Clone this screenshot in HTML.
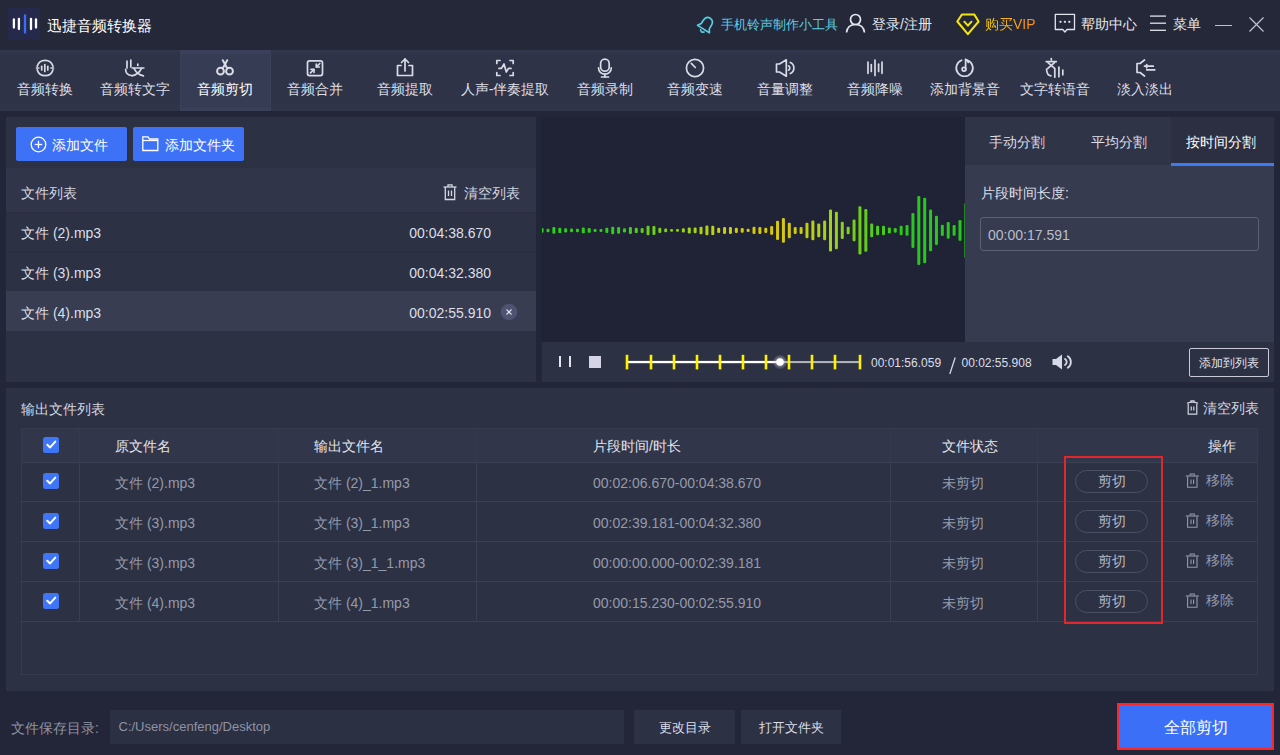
<!DOCTYPE html><html><head><meta charset="utf-8"><style>
html,body{margin:0;padding:0;}
body{width:1280px;height:755px;overflow:hidden;position:relative;background:#222638;font-family:"Liberation Sans",sans-serif;}
.t{position:absolute;white-space:nowrap;}
.b{position:absolute;box-sizing:border-box;}
svg{position:absolute;overflow:visible;}
</style></head><body>
<div class="b" style="left:0px;top:0px;width:1280px;height:50px;background:#242839;"></div>
<div class="b" style="left:8px;top:8px;width:32px;height:32px;background:#252a4d;"></div>
<svg style="left:0px;top:0px" width="48" height="48"><g stroke-linecap="round"><line x1="13.9" y1="19.5" x2="13.9" y2="27.5" stroke="#fff" stroke-width="2.3"/><line x1="18.9" y1="18.8" x2="18.9" y2="29" stroke="#fff" stroke-width="2.3"/><line x1="25" y1="15.5" x2="25" y2="32.5" stroke="#3a6ef6" stroke-width="2.3"/><line x1="31" y1="18.8" x2="31" y2="29" stroke="#fff" stroke-width="2.3"/><line x1="36" y1="19.5" x2="36" y2="27.5" stroke="#fff" stroke-width="2.3"/></g></svg>
<div class="t" style="top:15.7px;left:47.0px;font-size:15px;line-height:20px;color:#ffffff;">迅捷音频转换器</div>
<svg style="left:695px;top:14px" width="22" height="22" viewBox="0 0 22 22"><g transform="rotate(32 11 11)" fill="none" stroke="#56cfe1" stroke-width="1.7" stroke-linejoin="round" stroke-linecap="round"><path d="M11 3 C7.3 3 6.2 6 6.2 9 L6.2 12.3 L4 15.8 H18 L15.8 12.3 L15.8 9 C15.8 6 14.7 3 11 3 Z"/><path d="M9 18 Q11 20.3 13 18"/></g></svg>
<div class="t" style="top:14.7px;left:721.0px;font-size:12.5px;line-height:20px;color:#5fcde3;">手机铃声制作小工具</div>
<svg style="left:845px;top:13px" width="21" height="20" viewBox="0 0 21 20"><g fill="none" stroke="#e6e8ef" stroke-width="1.7"><circle cx="10.5" cy="6.5" r="5"/><path d="M1.5 19.5 Q2.5 11.5 10.5 11.5 Q18.5 11.5 19.5 19.5"/></g></svg>
<div class="t" style="top:13.9px;left:872.0px;font-size:14px;line-height:20px;color:#e6e8ef;">登录/注册</div>
<svg style="left:955px;top:13px" width="26" height="24" viewBox="0 0 26 24"><defs><radialGradient id="vg" cx="0.2" cy="0.8" r="0.5"><stop offset="0" stop-color="#c8c8c8" stop-opacity="0.6"/><stop offset="1" stop-color="#c8c8c8" stop-opacity="0"/></radialGradient></defs><path d="M7 1.4 L19.2 1.4 L23.6 8.5 L12.9 21.2 L2.3 8.5 Z" fill="none" stroke="#f3e60c" stroke-width="2" stroke-linejoin="round"/><path d="M9.3 8.7 L12.9 12.7 L16.5 8.7" fill="none" stroke="#f3e60c" stroke-width="2" stroke-linecap="round" stroke-linejoin="round"/></svg>
<div class="t" style="top:14.1px;left:985.0px;font-size:14px;line-height:20px;color:#f5b00c;"><span style="background:linear-gradient(90deg,#f6cf0a,#ff8a1c);-webkit-background-clip:text;color:transparent">购买VIP</span></div>
<svg style="left:1054px;top:13px" width="23" height="21" viewBox="0 0 23 21"><g fill="none" stroke="#e2e4ec" stroke-width="1.3" stroke-linejoin="round"><path d="M1.3 1.3 H20.5 V16.5 H13 L10.9 19 L8.8 16.5 H1.3 Z"/></g><circle cx="6.5" cy="8.8" r="1.15" fill="#e2e4ec"/><circle cx="10.9" cy="8.8" r="1.15" fill="#e2e4ec"/><circle cx="15.3" cy="8.8" r="1.15" fill="#e2e4ec"/></svg>
<div class="t" style="top:13.7px;left:1080.5px;font-size:14px;line-height:20px;color:#e6e8ef;">帮助中心</div>
<svg style="left:1149px;top:14px" width="18" height="18"><g stroke="#e2e4ec" stroke-width="1.3"><line x1="1" y1="2.1" x2="17" y2="2.1"/><line x1="1" y1="9.2" x2="17" y2="9.2"/><line x1="1" y1="16.3" x2="17" y2="16.3"/></g></svg>
<div class="t" style="top:13.9px;left:1173.0px;font-size:14px;line-height:20px;color:#e6e8ef;">菜单</div>
<div class="b" style="left:1215px;top:24.5px;width:17px;height:1.2px;background:#bfc1cc;"></div>
<svg style="left:1249px;top:17px" width="15" height="15"><g stroke="#bfc1cc" stroke-width="1.2"><line x1="0.5" y1="0.5" x2="14.5" y2="14.5"/><line x1="14.5" y1="0.5" x2="0.5" y2="14.5"/></g></svg>
<div class="b" style="left:0px;top:50px;width:1280px;height:61px;background:linear-gradient(#32374c,#2e3347 5px,#2e3347 54px,#30354a 55px,#30354a);"></div>
<div class="b" style="left:180px;top:50px;width:91px;height:61px;background:#363c53;box-shadow:inset 0 4px 0 #3a4059, inset 1px 0 0 #3b415b, inset -1px 0 0 #3b415b, inset 0 -3px 0 #3a4059"></div>
<div class="t" style="top:79.2px;left:-10.0px;width:110px;text-align:center;font-size:14px;line-height:20px;color:#dcdfe8;">音频转换</div>
<div class="t" style="top:79.2px;left:80.0px;width:110px;text-align:center;font-size:14px;line-height:20px;color:#dcdfe8;">音频转文字</div>
<div class="t" style="top:79.2px;left:170.0px;width:110px;text-align:center;font-size:14px;line-height:20px;color:#ffffff;">音频剪切</div>
<div class="t" style="top:79.2px;left:260.0px;width:110px;text-align:center;font-size:14px;line-height:20px;color:#dcdfe8;">音频合并</div>
<div class="t" style="top:79.2px;left:350.0px;width:110px;text-align:center;font-size:14px;line-height:20px;color:#dcdfe8;">音频提取</div>
<div class="t" style="top:79.2px;left:450.0px;width:110px;text-align:center;font-size:14px;line-height:20px;color:#dcdfe8;">人声-伴奏提取</div>
<div class="t" style="top:79.2px;left:550.0px;width:110px;text-align:center;font-size:14px;line-height:20px;color:#dcdfe8;">音频录制</div>
<div class="t" style="top:79.2px;left:640.0px;width:110px;text-align:center;font-size:14px;line-height:20px;color:#dcdfe8;">音频变速</div>
<div class="t" style="top:79.2px;left:730.0px;width:110px;text-align:center;font-size:14px;line-height:20px;color:#dcdfe8;">音量调整</div>
<div class="t" style="top:79.2px;left:820.0px;width:110px;text-align:center;font-size:14px;line-height:20px;color:#dcdfe8;">音频降噪</div>
<div class="t" style="top:79.2px;left:910.0px;width:110px;text-align:center;font-size:14px;line-height:20px;color:#dcdfe8;">添加背景音</div>
<div class="t" style="top:79.2px;left:1000.0px;width:110px;text-align:center;font-size:14px;line-height:20px;color:#dcdfe8;">文字转语音</div>
<div class="t" style="top:79.2px;left:1090.0px;width:110px;text-align:center;font-size:14px;line-height:20px;color:#dcdfe8;">淡入淡出</div>
<svg style="left:33.0px;top:56.0px" width="24" height="24" viewBox="0 0 24 24"><g fill="none" stroke="#d9dce6" stroke-width="1.7" stroke-linecap="round" stroke-linejoin="round"><path d="M4.2 10.3 A8.2 8.2 0 0 1 20 10.3"/><path d="M20 13.7 A8.2 8.2 0 0 1 4.2 13.7"/><line x1="11.8" y1="8.5" x2="11.8" y2="15.5"/><line x1="8.7" y1="10.3" x2="8.7" y2="14"/><line x1="14.8" y1="10.3" x2="14.8" y2="14"/><line x1="3.5" y1="12" x2="5.8" y2="12"/><line x1="18" y1="12" x2="20.5" y2="12"/></g></svg>
<svg style="left:123.0px;top:56.0px" width="24" height="24" viewBox="0 0 24 24"><g fill="none" stroke="#d9dce6" stroke-width="1.7" stroke-linecap="round" stroke-linejoin="round"><line x1="4" y1="5" x2="4" y2="12"/><line x1="7.8" y1="4" x2="7.8" y2="11"/><path d="M2.6 13.3 Q2.8 19.3 8.7 19.5"/><path d="M14.8 8 V9.5"/><line x1="9.2" y1="12" x2="20.8" y2="12"/><path d="M11 12.4 Q14 18.5 20.4 19.9"/><path d="M18.5 12.4 Q15.5 18.5 9 19.9"/></g></svg>
<svg style="left:213.0px;top:56.0px" width="24" height="24" viewBox="0 0 24 24"><g fill="none" stroke="#d9dce6" stroke-width="1.7" stroke-linecap="round" stroke-linejoin="round"><g stroke-width="2"><circle cx="7.5" cy="15.2" r="3.4"/><circle cx="16.5" cy="15.2" r="3.4"/><path d="M9.8 4.2 L14.3 12.4"/><path d="M14.2 4.2 L9.7 12.4"/></g></g></svg>
<svg style="left:303.0px;top:56.0px" width="24" height="24" viewBox="0 0 24 24"><g fill="none" stroke="#d9dce6" stroke-width="1.7" stroke-linecap="round" stroke-linejoin="round"><rect x="4.5" y="4.9" width="15" height="14.7" rx="2"/><path d="M7.5 16.8 L10.8 13.5"/><path d="M8 13.3 H11 V16.3"/><path d="M16.8 7.5 L13.5 10.8"/><path d="M13.3 8 V11 H16.3"/></g></svg>
<svg style="left:393.0px;top:56.0px" width="24" height="24" viewBox="0 0 24 24"><g fill="none" stroke="#d9dce6" stroke-width="1.7" stroke-linecap="round" stroke-linejoin="round"><path d="M8 9.5 H4.5 V19.5 H19.5 V9.5 H16"/><path d="M12 15 V3"/><path d="M8.5 6.5 L12 3 L15.5 6.5"/></g></svg>
<svg style="left:493.0px;top:56.0px" width="24" height="24" viewBox="0 0 24 24"><g fill="none" stroke="#d9dce6" stroke-width="1.7" stroke-linecap="round" stroke-linejoin="round"><path d="M3.8 7.5 V4.5 H7"/><path d="M17 4.5 H20.2 V7.5"/><path d="M20.2 16.5 V19.5 H17"/><path d="M7 19.5 H3.8 V16.5"/><path d="M6 12.4 H8.5 L11 8 L13.3 16 L15.5 12.4 H18"/></g></svg>
<svg style="left:593.0px;top:56.0px" width="24" height="24" viewBox="0 0 24 24"><g fill="none" stroke="#d9dce6" stroke-width="1.7" stroke-linecap="round" stroke-linejoin="round"><rect x="7.6" y="3.2" width="8.6" height="12" rx="4.3"/><path d="M5.5 11.8 A6.4 6.4 0 0 0 18.3 11.8"/><line x1="11.9" y1="18.2" x2="11.9" y2="21"/><line x1="8.5" y1="21" x2="15.5" y2="21"/></g></svg>
<svg style="left:683.0px;top:56.0px" width="24" height="24" viewBox="0 0 24 24"><g fill="none" stroke="#d9dce6" stroke-width="1.7" stroke-linecap="round" stroke-linejoin="round"><circle cx="12" cy="12" r="8.6"/><path d="M8.3 7.3 L12.3 11.5"/></g></svg>
<svg style="left:773.0px;top:56.0px" width="24" height="24" viewBox="0 0 24 24"><g fill="none" stroke="#d9dce6" stroke-width="1.7" stroke-linecap="round" stroke-linejoin="round"><path d="M3.5 8 H6.5 L13.3 3.8 V20.2 L6.5 16 H3.5 Z"/><path d="M15.5 9.8 A2.5 2.5 0 0 1 15.5 14.2"/><path d="M17.3 6.5 A6 6 0 0 1 17.3 17.5"/></g></svg>
<svg style="left:863.0px;top:56.0px" width="24" height="24" viewBox="0 0 24 24"><g fill="none" stroke="#d9dce6" stroke-width="1.7" stroke-linecap="round" stroke-linejoin="round"><line x1="5" y1="6" x2="5" y2="17.3"/><line x1="8.3" y1="8.5" x2="8.3" y2="15.5"/><line x1="12" y1="4" x2="12" y2="19.5"/><line x1="15.6" y1="8.2" x2="15.6" y2="15.5"/><line x1="19" y1="6" x2="19" y2="17.3"/></g></svg>
<svg style="left:953.0px;top:56.0px" width="24" height="24" viewBox="0 0 24 24"><g fill="none" stroke="#d9dce6" stroke-width="1.7" stroke-linecap="round" stroke-linejoin="round"><path d="M8.6 4.2 A8.3 8.3 0 1 0 14.5 4.2"/><path d="M12.6 3.3 V13.5"/><path d="M12.8 3.6 Q15 4.5 15.2 6.5"/><circle cx="11" cy="13.2" r="1.9"/></g></svg>
<svg style="left:1043.0px;top:56.0px" width="24" height="24" viewBox="0 0 24 24"><g fill="none" stroke="#d9dce6" stroke-width="1.7" stroke-linecap="round" stroke-linejoin="round"><path d="M8.3 2.6 V4"/><line x1="3.2" y1="5.6" x2="13.3" y2="5.6"/><path d="M5 6.6 L11.7 12.4"/><path d="M11.5 6.6 L4.8 12.4"/><path d="M3.6 13.2 Q3.8 19.5 8 19.8"/><line x1="11.8" y1="13" x2="11.8" y2="21.2"/><line x1="15.9" y1="11.2" x2="15.9" y2="20.7"/><line x1="19.8" y1="14" x2="19.8" y2="18.8"/></g></svg>
<svg style="left:1133.0px;top:56.0px" width="24" height="24" viewBox="0 0 24 24"><g fill="none" stroke="#d9dce6" stroke-width="1.7" stroke-linecap="round" stroke-linejoin="round"><path d="M11.5 4 L7 7.5 H4 V16.5 H7 L11.5 20"/><path d="M11.5 10.2 H20.3"/><path d="M13.7 8.6 V11.8"/><path d="M13.7 13.8 H21.8"/></g></svg>
<div class="b" style="left:0px;top:111px;width:1280px;height:6px;background:#222638;"></div>
<div class="b" style="left:6px;top:117px;width:530px;height:265px;background:#2c3144;"></div>
<div class="b" style="left:6px;top:168px;width:530px;height:44px;background:#30354a;"></div>
<div class="b" style="left:16px;top:127px;width:111px;height:34px;background:#3d72f7;border-radius:2px"></div>
<div class="b" style="left:133px;top:127px;width:111px;height:34px;background:#3d72f7;border-radius:2px"></div>
<svg style="left:30px;top:136px" width="17" height="17"><g fill="none" stroke="#fff" stroke-width="1.3"><circle cx="8.5" cy="8.5" r="7.3"/><line x1="8.5" y1="4.8" x2="8.5" y2="12.2"/><line x1="4.8" y1="8.5" x2="12.2" y2="8.5"/></g></svg>
<div class="t" style="top:135.0px;left:51.5px;font-size:14px;line-height:20px;color:#ffffff;">添加文件</div>
<svg style="left:142px;top:135px" width="17" height="17"><g fill="none" stroke="#fff" stroke-width="1.3"><path d="M0.8 1.8 H6 L7.5 4 H15.8 V15.5 H0.8 Z"/><line x1="0.8" y1="5.5" x2="15.8" y2="5.5"/></g></svg>
<div class="t" style="top:135.0px;left:164.5px;font-size:14px;line-height:20px;color:#ffffff;">添加文件夹</div>
<div class="t" style="top:183.2px;left:21.0px;font-size:14px;line-height:20px;color:#d4d7e0;">文件列表</div>
<svg style="left:443px;top:184px" width="15" height="17"><g fill="none" stroke="#d4d7e0" stroke-width="1.3"><line x1="0.5" y1="3" x2="13.5" y2="3"/><path d="M5 3 V0.8 H9 V3"/><path d="M2.3 3 V15.5 H11.7 V3"/><line x1="5.5" y1="6.5" x2="5.5" y2="12"/><line x1="8.5" y1="6.5" x2="8.5" y2="12"/></g></svg>
<div class="t" style="top:183.0px;left:463.5px;font-size:14px;line-height:20px;color:#d4d7e0;">清空列表</div>
<div class="b" style="left:6px;top:212px;width:530px;height:1px;background:#2a2e40;"></div>
<div class="b" style="left:6px;top:251px;width:530px;height:2px;background:#2a2f41;"></div>
<div class="b" style="left:6px;top:291px;width:530px;height:40px;background:#383d52;"></div>
<div class="t" style="top:222.5px;left:21.0px;font-size:14px;line-height:20px;color:#dcdfe8;">文件 (2).mp3</div>
<div class="t" style="top:222.5px;right:789.0px;text-align:right;font-size:14px;line-height:20px;color:#dcdfe8;">00:04:38.670</div>
<div class="t" style="top:262.5px;left:21.0px;font-size:14px;line-height:20px;color:#dcdfe8;">文件 (3).mp3</div>
<div class="t" style="top:262.5px;right:789.0px;text-align:right;font-size:14px;line-height:20px;color:#dcdfe8;">00:04:32.380</div>
<div class="t" style="top:302.5px;left:21.0px;font-size:14px;line-height:20px;color:#dcdfe8;">文件 (4).mp3</div>
<div class="t" style="top:302.5px;right:789.0px;text-align:right;font-size:14px;line-height:20px;color:#dcdfe8;">00:02:55.910</div>
<svg style="left:500px;top:303px" width="18" height="18"><circle cx="9" cy="9" r="8.3" fill="#4d5370"/><g stroke="#e8e8f0" stroke-width="1.1"><line x1="6.5" y1="6.5" x2="11.5" y2="11.5"/><line x1="11.5" y1="6.5" x2="6.5" y2="11.5"/></g></svg>
<div class="b" style="left:542px;top:117px;width:423px;height:225px;background:#1f2335;"></div>
<svg style="left:542px;top:117px" width="423" height="225" viewBox="0 0 423 225"><defs><clipPath id="wc"><rect x="0" y="0" width="423" height="225"/></clipPath></defs><g clip-path="url(#wc)"><rect x="-1.40" y="111.05" width="3.0" height="4.70" rx="1.2" fill="rgb(44, 206, 28)"/><rect x="4.49" y="111.65" width="3.0" height="3.50" rx="1.2" fill="rgb(45, 206, 28)"/><rect x="10.37" y="110.10" width="3.0" height="6.60" rx="1.2" fill="rgb(45, 206, 28)"/><rect x="16.26" y="110.70" width="3.0" height="5.40" rx="1.2" fill="rgb(45, 206, 28)"/><rect x="22.14" y="111.30" width="3.0" height="4.20" rx="1.2" fill="rgb(46, 206, 28)"/><rect x="28.03" y="111.55" width="3.0" height="3.70" rx="1.2" fill="rgb(46, 206, 28)"/><rect x="33.92" y="111.65" width="3.0" height="3.50" rx="1.2" fill="rgb(47, 206, 28)"/><rect x="39.80" y="110.45" width="3.0" height="5.90" rx="1.2" fill="rgb(47, 206, 28)"/><rect x="45.69" y="110.95" width="3.0" height="4.90" rx="1.2" fill="rgb(48, 206, 28)"/><rect x="51.57" y="111.90" width="3.0" height="3.00" rx="1.2" fill="rgb(48, 206, 28)"/><rect x="57.46" y="111.90" width="3.0" height="3.00" rx="1.2" fill="rgb(49, 206, 28)"/><rect x="63.35" y="110.80" width="3.0" height="5.20" rx="1.2" fill="rgb(49, 206, 28)"/><rect x="69.23" y="109.65" width="3.0" height="7.50" rx="1.2" fill="rgb(49, 206, 28)"/><rect x="75.12" y="110.00" width="3.0" height="6.80" rx="1.2" fill="rgb(50, 206, 28)"/><rect x="81.00" y="111.30" width="3.0" height="4.20" rx="1.2" fill="rgb(58, 206, 28)"/><rect x="86.89" y="109.90" width="3.0" height="7.00" rx="1.2" fill="rgb(69, 207, 27)"/><rect x="92.78" y="110.70" width="3.0" height="5.40" rx="1.2" fill="rgb(80, 207, 27)"/><rect x="98.66" y="110.90" width="3.0" height="5.00" rx="1.2" fill="rgb(91, 207, 27)"/><rect x="104.55" y="108.65" width="3.0" height="9.50" rx="1.2" fill="rgb(101, 208, 26)"/><rect x="110.43" y="108.90" width="3.0" height="9.00" rx="1.2" fill="rgb(110, 208, 26)"/><rect x="116.32" y="110.80" width="3.0" height="5.20" rx="1.2" fill="rgb(119, 209, 26)"/><rect x="122.21" y="111.55" width="3.0" height="3.70" rx="1.2" fill="rgb(127, 210, 25)"/><rect x="128.09" y="112.00" width="3.0" height="2.80" rx="1.2" fill="rgb(135, 210, 25)"/><rect x="133.98" y="112.00" width="3.0" height="2.80" rx="1.2" fill="rgb(143, 211, 25)"/><rect x="139.86" y="111.30" width="3.0" height="4.20" rx="1.2" fill="rgb(151, 211, 24)"/><rect x="145.75" y="110.40" width="3.0" height="6.00" rx="1.2" fill="rgb(159, 212, 24)"/><rect x="151.64" y="110.60" width="3.0" height="5.60" rx="1.2" fill="rgb(167, 212, 23)"/><rect x="157.52" y="109.65" width="3.0" height="7.50" rx="1.2" fill="rgb(174, 211, 23)"/><rect x="163.41" y="108.50" width="3.0" height="9.80" rx="1.2" fill="rgb(181, 211, 22)"/><rect x="169.29" y="108.70" width="3.0" height="9.40" rx="1.2" fill="rgb(189, 210, 21)"/><rect x="175.18" y="110.80" width="3.0" height="5.20" rx="1.2" fill="rgb(196, 210, 20)"/><rect x="181.07" y="109.90" width="3.0" height="7.00" rx="1.2" fill="rgb(201, 208, 19)"/><rect x="186.95" y="109.90" width="3.0" height="7.00" rx="1.2" fill="rgb(205, 206, 18)"/><rect x="192.84" y="110.80" width="3.0" height="5.20" rx="1.2" fill="rgb(208, 203, 17)"/><rect x="198.72" y="111.05" width="3.0" height="4.70" rx="1.2" fill="rgb(212, 201, 16)"/><rect x="204.61" y="111.75" width="3.0" height="3.30" rx="1.2" fill="rgb(214, 200, 16)"/><rect x="210.50" y="109.80" width="3.0" height="7.20" rx="1.2" fill="rgb(214, 200, 16)"/><rect x="216.38" y="109.90" width="3.0" height="7.00" rx="1.2" fill="rgb(214, 200, 16)"/><rect x="222.27" y="110.80" width="3.0" height="5.20" rx="1.2" fill="rgb(214, 200, 16)"/><rect x="228.15" y="108.95" width="3.0" height="8.90" rx="1.2" fill="rgb(214, 200, 16)"/><rect x="234.04" y="103.80" width="3.0" height="19.20" rx="1.2" fill="rgb(214, 200, 16)"/><rect x="239.93" y="101.00" width="3.0" height="24.80" rx="1.2" fill="rgb(214, 200, 16)"/><rect x="245.81" y="105.65" width="3.0" height="15.50" rx="1.2" fill="rgb(214, 200, 16)"/><rect x="251.70" y="109.90" width="3.0" height="7.00" rx="1.2" fill="rgb(207, 202, 17)"/><rect x="257.58" y="109.90" width="3.0" height="7.00" rx="1.2" fill="rgb(199, 203, 18)"/><rect x="263.47" y="105.65" width="3.0" height="15.50" rx="1.2" fill="rgb(191, 205, 19)"/><rect x="269.36" y="103.55" width="3.0" height="19.70" rx="1.2" fill="rgb(183, 207, 21)"/><rect x="275.24" y="106.60" width="3.0" height="13.60" rx="1.2" fill="rgb(175, 209, 22)"/><rect x="281.13" y="103.55" width="3.0" height="19.70" rx="1.2" fill="rgb(167, 210, 23)"/><rect x="287.01" y="92.40" width="3.0" height="42.00" rx="1.2" fill="rgb(159, 212, 24)"/><rect x="292.90" y="94.65" width="3.0" height="37.50" rx="1.2" fill="rgb(149, 211, 24)"/><rect x="298.79" y="104.75" width="3.0" height="17.30" rx="1.2" fill="rgb(138, 210, 25)"/><rect x="304.67" y="109.65" width="3.0" height="7.50" rx="1.2" fill="rgb(128, 209, 25)"/><rect x="310.56" y="102.60" width="3.0" height="21.60" rx="1.2" fill="rgb(118, 208, 25)"/><rect x="316.44" y="89.25" width="3.0" height="48.30" rx="1.2" fill="rgb(108, 208, 25)"/><rect x="322.33" y="92.10" width="3.0" height="42.60" rx="1.2" fill="rgb(97, 207, 26)"/><rect x="328.22" y="106.55" width="3.0" height="13.70" rx="1.2" fill="rgb(88, 206, 26)"/><rect x="334.10" y="108.65" width="3.0" height="9.50" rx="1.2" fill="rgb(79, 205, 26)"/><rect x="339.99" y="108.65" width="3.0" height="9.50" rx="1.2" fill="rgb(71, 204, 27)"/><rect x="345.87" y="110.40" width="3.0" height="6.00" rx="1.2" fill="rgb(62, 203, 27)"/><rect x="351.76" y="111.00" width="3.0" height="4.80" rx="1.2" fill="rgb(54, 202, 27)"/><rect x="357.65" y="108.65" width="3.0" height="9.50" rx="1.2" fill="rgb(46, 201, 28)"/><rect x="363.53" y="108.05" width="3.0" height="10.70" rx="1.2" fill="rgb(40, 200, 28)"/><rect x="369.42" y="95.90" width="3.0" height="35.00" rx="1.2" fill="rgb(40, 200, 28)"/><rect x="375.30" y="78.90" width="3.0" height="69.00" rx="1.2" fill="rgb(40, 200, 28)"/><rect x="381.19" y="80.65" width="3.0" height="65.50" rx="1.2" fill="rgb(40, 200, 28)"/><rect x="387.08" y="92.55" width="3.0" height="41.70" rx="1.2" fill="rgb(40, 200, 28)"/><rect x="392.96" y="98.80" width="3.0" height="29.20" rx="1.2" fill="rgb(40, 200, 28)"/><rect x="398.85" y="107.75" width="3.0" height="11.30" rx="1.2" fill="rgb(40, 200, 28)"/><rect x="404.73" y="105.05" width="3.0" height="16.70" rx="1.2" fill="rgb(40, 200, 28)"/><rect x="410.62" y="108.05" width="3.0" height="10.70" rx="1.2" fill="rgb(40, 200, 28)"/><rect x="416.51" y="102.95" width="3.0" height="20.90" rx="1.2" fill="rgb(40, 200, 28)"/><rect x="422.39" y="85.90" width="3.0" height="55.00" rx="1.2" fill="rgb(40, 200, 28)"/></g></svg>
<div class="b" style="left:542px;top:342px;width:732px;height:40px;background:#2c3144;"></div>
<div class="b" style="left:559px;top:356px;width:2.2px;height:11px;background:#e4e4ee;"></div>
<div class="b" style="left:569px;top:356px;width:2.2px;height:11px;background:#e4e4ee;"></div>
<div class="b" style="left:589px;top:356px;width:12px;height:12px;background:#d4d4e6;"></div>
<svg style="left:620px;top:348px" width="250" height="28" viewBox="0 0 250 28"><rect x="7" y="12.9" width="153" height="2.3" fill="#ffffff"/><rect x="160" y="13" width="80" height="2.1" fill="#aeb0b8"/><rect x="5.7" y="6.8" width="2.6" height="14.6" fill="#fff000"/><rect x="29.7" y="6.8" width="2.6" height="14.6" fill="#fff000"/><rect x="52.7" y="6.8" width="2.6" height="14.6" fill="#fff000"/><rect x="75.7" y="6.8" width="2.6" height="14.6" fill="#fff000"/><rect x="98.7" y="6.8" width="2.6" height="14.6" fill="#fff000"/><rect x="121.7" y="6.8" width="2.6" height="14.6" fill="#fff000"/><rect x="144.7" y="6.8" width="2.6" height="14.6" fill="#fff000"/><rect x="167.7" y="6.8" width="2.6" height="14.6" fill="#fff000"/><rect x="190.7" y="6.8" width="2.6" height="14.6" fill="#fff000"/><rect x="213.7" y="6.8" width="2.6" height="14.6" fill="#fff000"/><rect x="238.7" y="6.8" width="2.6" height="14.6" fill="#fff000"/><defs><radialGradient id="kh"><stop offset="0.4" stop-color="#c8cad6" stop-opacity="0.6"/><stop offset="1" stop-color="#c8cad6" stop-opacity="0"/></radialGradient></defs><circle cx="160" cy="14" r="7.5" fill="url(#kh)"/><circle cx="160" cy="14" r="3.8" fill="#ffffff"/></svg>
<div class="t" style="top:353.0px;left:871.0px;font-size:12px;line-height:20px;color:#dcdfe8;">00:01:56.059</div>
<svg style="left:948px;top:356px" width="9" height="20"><line x1="7.2" y1="1.5" x2="1.8" y2="18" stroke="#d4d7e0" stroke-width="1.3"/></svg>
<div class="t" style="top:353.0px;left:961.5px;font-size:12px;line-height:20px;color:#dcdfe8;">00:02:55.908</div>
<svg style="left:1052px;top:354px" width="22" height="16" viewBox="0 0 22 16"><path d="M0.5 5 H4 L10 0.5 V15.5 L4 11 H0.5 Z" fill="#d8d9e6"/><g fill="none" stroke="#d8d9e6" stroke-width="1.8" stroke-linecap="round"><path d="M13 5 A3.5 3.5 0 0 1 13 11"/><path d="M15.8 2.2 A7 7 0 0 1 15.8 13.8"/></g></svg>
<div class="b" style="left:1189px;top:348px;width:80px;height:29px;background:transparent;border:1px solid #c9ccd8;border-radius:2px"></div>
<div class="t" style="top:352.5px;left:1189.0px;width:80px;text-align:center;font-size:12.2px;line-height:20px;color:#e2e4ec;">添加到列表</div>
<div class="b" style="left:965px;top:117px;width:309px;height:225px;background:#363b50;"></div>
<div class="b" style="left:965px;top:117px;width:309px;height:48px;background:#2f3447;"></div>
<div class="b" style="left:1171px;top:117px;width:103px;height:48px;background:#2b2f41;"></div>
<div class="b" style="left:1171px;top:163px;width:103px;height:2.5px;background:#3b7cf4;"></div>
<div class="t" style="top:132.2px;left:966.5px;width:100px;text-align:center;font-size:14px;line-height:20px;color:#dcdfe8;">手动分割</div>
<div class="t" style="top:132.2px;left:1068.5px;width:100px;text-align:center;font-size:14px;line-height:20px;color:#dcdfe8;">平均分割</div>
<div class="t" style="top:132.2px;left:1171.0px;width:100px;text-align:center;font-size:14px;line-height:20px;color:#ffffff;">按时间分割</div>
<div class="t" style="top:183.0px;left:981.0px;font-size:14px;line-height:20px;color:#dcdfe8;">片段时间长度:</div>
<div class="b" style="left:980px;top:217px;width:279px;height:34px;background:transparent;border:1px solid #5b6073;border-radius:3px"></div>
<div class="t" style="top:225.0px;left:988.0px;font-size:14px;line-height:20px;color:#b9bdcb;">00:00:17.591</div>
<div class="b" style="left:6px;top:388px;width:1268px;height:303px;background:#2c3144;"></div>
<div class="t" style="top:399.0px;left:21.0px;font-size:14px;line-height:20px;color:#d4d7e0;">输出文件列表</div>
<svg style="left:1186px;top:400px" width="13" height="16"><g fill="none" stroke="#d4d7e0" stroke-width="1.2"><path d="M1 3.2 Q6.5 1 12 3.2"/><path d="M5 2 V0.9 H8 V2"/><path d="M2.2 3.6 V14.2 H10.8 V3.6"/><line x1="5.2" y1="6.5" x2="5.2" y2="10.5"/><line x1="7.8" y1="6.5" x2="7.8" y2="10.5"/></g></svg>
<div class="t" style="top:398.2px;left:1203.0px;font-size:14px;line-height:20px;color:#d4d7e0;">清空列表</div>
<div class="b" style="left:21px;top:428px;width:1237px;height:247px;background:transparent;border:1px solid #363b4e"></div>
<div class="b" style="left:22px;top:429px;width:1235px;height:33px;background:#31364b;"></div>
<div class="b" style="left:22px;top:462px;width:1235px;height:1px;background:#3a3f52;"></div>
<div class="b" style="left:22px;top:501px;width:1235px;height:1px;background:#3a3f52;"></div>
<div class="b" style="left:22px;top:541px;width:1235px;height:1px;background:#3a3f52;"></div>
<div class="b" style="left:22px;top:581px;width:1235px;height:1px;background:#3a3f52;"></div>
<div class="b" style="left:22px;top:621px;width:1235px;height:1px;background:#3a3f52;"></div>
<div class="b" style="left:79px;top:429px;width:1px;height:33px;background:#34394e;"></div>
<div class="b" style="left:79px;top:462px;width:1px;height:159px;background:#3a3f52;"></div>
<div class="b" style="left:278px;top:429px;width:1px;height:33px;background:#34394e;"></div>
<div class="b" style="left:278px;top:462px;width:1px;height:159px;background:#3a3f52;"></div>
<div class="b" style="left:476px;top:429px;width:1px;height:33px;background:#34394e;"></div>
<div class="b" style="left:476px;top:462px;width:1px;height:159px;background:#3a3f52;"></div>
<div class="b" style="left:890px;top:429px;width:1px;height:33px;background:#34394e;"></div>
<div class="b" style="left:890px;top:462px;width:1px;height:159px;background:#3a3f52;"></div>
<div class="b" style="left:1037px;top:429px;width:1px;height:33px;background:#34394e;"></div>
<div class="b" style="left:1037px;top:462px;width:1px;height:159px;background:#3a3f52;"></div>
<div class="t" style="top:436.0px;left:115.0px;font-size:14px;line-height:20px;color:#e2e4ec;">原文件名</div>
<div class="t" style="top:436.0px;left:314.0px;font-size:14px;line-height:20px;color:#e2e4ec;">输出文件名</div>
<div class="t" style="top:436.0px;left:593.0px;font-size:14px;line-height:20px;color:#e2e4ec;">片段时间/时长</div>
<div class="t" style="top:436.0px;left:942.0px;font-size:14px;line-height:20px;color:#e2e4ec;">文件状态</div>
<div class="t" style="top:436.0px;left:1208.0px;font-size:14px;line-height:20px;color:#e2e4ec;">操作</div>
<svg style="left:43px;top:437px" width="16" height="16"><rect x="0" y="0" width="16" height="16" rx="2.5" fill="#3f76f5"/><path d="M4.3 7.8 L7.1 10.4 L12.3 4.6" fill="none" stroke="#fff" stroke-width="2" stroke-linecap="round" stroke-linejoin="round"/></svg>
<svg style="left:43px;top:473px" width="16" height="16"><rect x="0" y="0" width="16" height="16" rx="2.5" fill="#3f76f5"/><path d="M4.3 7.8 L7.1 10.4 L12.3 4.6" fill="none" stroke="#fff" stroke-width="2" stroke-linecap="round" stroke-linejoin="round"/></svg>
<div class="t" style="top:472.5px;left:115.0px;font-size:14px;line-height:20px;color:#959aab;">文件 (2).mp3</div>
<div class="t" style="top:472.5px;left:314.0px;font-size:14px;line-height:20px;color:#959aab;">文件 (2)_1.mp3</div>
<div class="t" style="top:472.5px;left:593.0px;font-size:14px;line-height:20px;color:#959aab;">00:02:06.670-00:04:38.670</div>
<div class="t" style="top:472.5px;left:942.0px;font-size:14px;line-height:20px;color:#959aab;">未剪切</div>
<div class="b" style="left:1075px;top:470px;width:73px;height:23px;background:transparent;border:1px solid #4b5064;border-radius:12px"></div>
<div class="t" style="top:472.0px;left:1081.5px;width:60px;text-align:center;font-size:13.5px;line-height:20px;color:#b4b8c6;">剪切</div>
<svg style="left:1185px;top:473px" width="15" height="16"><g fill="none" stroke="#959aab" stroke-width="1.1"><line x1="0.8" y1="3" x2="13.8" y2="3"/><path d="M5.2 2.5 V1 H9.3 V2.5"/><path d="M2.6 3.5 V14.2 H12 V3.5"/><line x1="6" y1="6.5" x2="6" y2="11"/><line x1="8.6" y1="6.5" x2="8.6" y2="11"/></g></svg>
<div class="t" style="top:470.2px;left:1206.0px;font-size:14px;line-height:20px;color:#959aab;">移除</div>
<svg style="left:43px;top:513px" width="16" height="16"><rect x="0" y="0" width="16" height="16" rx="2.5" fill="#3f76f5"/><path d="M4.3 7.8 L7.1 10.4 L12.3 4.6" fill="none" stroke="#fff" stroke-width="2" stroke-linecap="round" stroke-linejoin="round"/></svg>
<div class="t" style="top:512.5px;left:115.0px;font-size:14px;line-height:20px;color:#959aab;">文件 (3).mp3</div>
<div class="t" style="top:512.5px;left:314.0px;font-size:14px;line-height:20px;color:#959aab;">文件 (3)_1.mp3</div>
<div class="t" style="top:512.5px;left:593.0px;font-size:14px;line-height:20px;color:#959aab;">00:02:39.181-00:04:32.380</div>
<div class="t" style="top:512.5px;left:942.0px;font-size:14px;line-height:20px;color:#959aab;">未剪切</div>
<div class="b" style="left:1075px;top:510px;width:73px;height:23px;background:transparent;border:1px solid #4b5064;border-radius:12px"></div>
<div class="t" style="top:512.0px;left:1081.5px;width:60px;text-align:center;font-size:13.5px;line-height:20px;color:#b4b8c6;">剪切</div>
<svg style="left:1185px;top:513px" width="15" height="16"><g fill="none" stroke="#959aab" stroke-width="1.1"><line x1="0.8" y1="3" x2="13.8" y2="3"/><path d="M5.2 2.5 V1 H9.3 V2.5"/><path d="M2.6 3.5 V14.2 H12 V3.5"/><line x1="6" y1="6.5" x2="6" y2="11"/><line x1="8.6" y1="6.5" x2="8.6" y2="11"/></g></svg>
<div class="t" style="top:510.2px;left:1206.0px;font-size:14px;line-height:20px;color:#959aab;">移除</div>
<svg style="left:43px;top:553px" width="16" height="16"><rect x="0" y="0" width="16" height="16" rx="2.5" fill="#3f76f5"/><path d="M4.3 7.8 L7.1 10.4 L12.3 4.6" fill="none" stroke="#fff" stroke-width="2" stroke-linecap="round" stroke-linejoin="round"/></svg>
<div class="t" style="top:552.5px;left:115.0px;font-size:14px;line-height:20px;color:#959aab;">文件 (3).mp3</div>
<div class="t" style="top:552.5px;left:314.0px;font-size:14px;line-height:20px;color:#959aab;">文件 (3)_1_1.mp3</div>
<div class="t" style="top:552.5px;left:593.0px;font-size:14px;line-height:20px;color:#959aab;">00:00:00.000-00:02:39.181</div>
<div class="t" style="top:552.5px;left:942.0px;font-size:14px;line-height:20px;color:#959aab;">未剪切</div>
<div class="b" style="left:1075px;top:550px;width:73px;height:23px;background:transparent;border:1px solid #4b5064;border-radius:12px"></div>
<div class="t" style="top:552.0px;left:1081.5px;width:60px;text-align:center;font-size:13.5px;line-height:20px;color:#b4b8c6;">剪切</div>
<svg style="left:1185px;top:553px" width="15" height="16"><g fill="none" stroke="#959aab" stroke-width="1.1"><line x1="0.8" y1="3" x2="13.8" y2="3"/><path d="M5.2 2.5 V1 H9.3 V2.5"/><path d="M2.6 3.5 V14.2 H12 V3.5"/><line x1="6" y1="6.5" x2="6" y2="11"/><line x1="8.6" y1="6.5" x2="8.6" y2="11"/></g></svg>
<div class="t" style="top:550.2px;left:1206.0px;font-size:14px;line-height:20px;color:#959aab;">移除</div>
<svg style="left:43px;top:593px" width="16" height="16"><rect x="0" y="0" width="16" height="16" rx="2.5" fill="#3f76f5"/><path d="M4.3 7.8 L7.1 10.4 L12.3 4.6" fill="none" stroke="#fff" stroke-width="2" stroke-linecap="round" stroke-linejoin="round"/></svg>
<div class="t" style="top:592.5px;left:115.0px;font-size:14px;line-height:20px;color:#959aab;">文件 (4).mp3</div>
<div class="t" style="top:592.5px;left:314.0px;font-size:14px;line-height:20px;color:#959aab;">文件 (4)_1.mp3</div>
<div class="t" style="top:592.5px;left:593.0px;font-size:14px;line-height:20px;color:#959aab;">00:00:15.230-00:02:55.910</div>
<div class="t" style="top:592.5px;left:942.0px;font-size:14px;line-height:20px;color:#959aab;">未剪切</div>
<div class="b" style="left:1075px;top:590px;width:73px;height:23px;background:transparent;border:1px solid #4b5064;border-radius:12px"></div>
<div class="t" style="top:592.0px;left:1081.5px;width:60px;text-align:center;font-size:13.5px;line-height:20px;color:#b4b8c6;">剪切</div>
<svg style="left:1185px;top:593px" width="15" height="16"><g fill="none" stroke="#959aab" stroke-width="1.1"><line x1="0.8" y1="3" x2="13.8" y2="3"/><path d="M5.2 2.5 V1 H9.3 V2.5"/><path d="M2.6 3.5 V14.2 H12 V3.5"/><line x1="6" y1="6.5" x2="6" y2="11"/><line x1="8.6" y1="6.5" x2="8.6" y2="11"/></g></svg>
<div class="t" style="top:590.2px;left:1206.0px;font-size:14px;line-height:20px;color:#959aab;">移除</div>
<div class="b" style="left:1064px;top:456px;width:99px;height:168px;background:transparent;border:2px solid #e3262b"></div>
<div class="b" style="left:0px;top:691px;width:1280px;height:64px;background:#222638;"></div>
<div class="t" style="top:718.3px;left:11.0px;font-size:14px;line-height:20px;color:#8f93a3;">文件保存目录:</div>
<div class="b" style="left:110px;top:710px;width:514px;height:34px;background:#2b3043;"></div>
<div class="t" style="top:717.0px;left:118.5px;font-size:13px;line-height:20px;color:#8f93a3;">C:/Users/cenfeng/Desktop</div>
<div class="b" style="left:634px;top:710px;width:101px;height:34px;background:#2c3144;"></div>
<div class="t" style="top:718.0px;left:634.5px;width:100px;text-align:center;font-size:12.5px;line-height:20px;color:#dcdfe8;">更改目录</div>
<div class="b" style="left:741px;top:710px;width:100px;height:34px;background:#2c3144;"></div>
<div class="t" style="top:718.0px;left:741.0px;width:100px;text-align:center;font-size:12.5px;line-height:20px;color:#dcdfe8;">打开文件夹</div>
<div class="b" style="left:1117px;top:703px;width:157px;height:47px;background:#3b6ff7;border:2px solid #ff2525"></div>
<div class="t" style="top:717.9px;left:1120.5px;width:150px;text-align:center;font-size:16px;line-height:20px;color:#ffffff;">全部剪切</div>
</body></html>
